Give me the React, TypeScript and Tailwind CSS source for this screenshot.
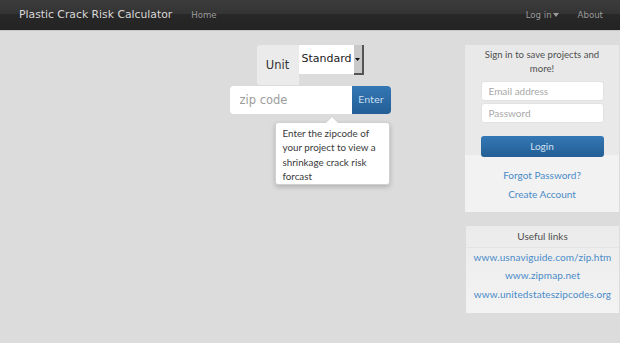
import { ChangeEvent, useState } from 'react';

const links = [
  'www.usnaviguide.com/zip.htm',
  'www.zipmap.net',
  'www.unitedstateszipcodes.org',
];

export default function App() {
  const [zip, setZip] = useState('');

  return (
    <div className="min-h-[343px] w-[620px] bg-[#dcdcdc] font-['DejaVu_Sans',sans-serif]">
      <nav className="flex h-[31px] items-center border-b border-[#c8c8c8] bg-[linear-gradient(#3c3c3c_0%,#343434_45%,#282828_46%,#232323_100%)] pl-[19px] pr-[17px]">
        <span className="text-[10.8px] text-[#d8d8d8]">Plastic Crack Risk Calculator</span>
        <span className="ml-[19px] text-[8.6px] text-[#9a9a9a]">Home</span>
        <div className="ml-auto flex items-center gap-[19px] text-[8.6px] text-[#9a9a9a]">
          <span className="flex items-center">
            Log in
            <svg width="6" height="4" viewBox="0 0 6 4" className="ml-[1px]">
              <path d="M0 0h6L3 4z" fill="#9a9a9a" />
            </svg>
          </span>
          <span>About</span>
        </div>
      </nav>

      <div className="grid grid-cols-[155px_310px_155px] pt-[14px]">
        <div />

        <div className="flex flex-col items-center">
          <div className="flex">
            <div className="flex h-[40px] w-[42px] items-center justify-center rounded-l-[3px] bg-[#ebebeb] pt-[1px] text-[11.5px] text-[#333]">
              Unit
            </div>
            <div className="flex h-[29px] w-[55px] items-center bg-white pl-[3px] text-[11px] text-[#222]">Standard</div>
            <div className="flex h-[30px] w-[10px] items-center justify-center border-r-2 border-b-2 border-[#555] bg-[#c9c9c9]">
              <svg width="5" height="3" viewBox="0 0 5 3">
                <path d="M0 0h5L2.5 3z" fill="#111" />
              </svg>
            </div>
          </div>

          <div className="mt-[1px] flex h-[28px]">
            <input
              value={zip}
              onChange={(e: ChangeEvent<HTMLInputElement>) => setZip(e.target.value)}
              placeholder="zip code"
              className="h-[28px] w-[122px] rounded-l-[4px] bg-white pl-[10px] text-[11.5px] text-[#333] outline-none placeholder:text-[#9c9c9c]"
            />
            <button className="h-[28px] w-[39px] rounded-r-[4px] bg-[linear-gradient(#3377b5,#245e95)] text-[9.5px] text-[#cfe0f2]">
              Enter
            </button>
          </div>

          <div className="relative ml-[44px] mt-[8px] w-[115px] rounded-[3px] border border-[#d0d0d0] bg-white px-[7px] pb-[1px] pt-[3px] font-['Lato',sans-serif] text-[9.8px] leading-[14.3px] text-[#3a3a3a] shadow-[0_2px_5px_rgba(0,0,0,0.2)]">
            <div className="absolute left-[49px] top-[-7px] h-0 w-0 border-x-[7px] border-b-[7px] border-x-transparent border-b-[#d0d0d0]" />
            <div className="absolute left-[50px] top-[-6px] h-0 w-0 border-x-[6px] border-b-[6px] border-x-transparent border-b-white" />
            Enter the zipcode of your project to view a shrinkage crack risk forcast
          </div>
        </div>

        <div className="flex flex-col pr-[1px] font-['Lato',sans-serif]">
          <div className="flex flex-col items-center bg-[linear-gradient(#e9e9e9_0%,#e9e9e9_66%,#f2f2f2_66%,#f2f2f2_100%)] px-[6px] pb-[11px] pt-[3px]">
            <p className="whitespace-nowrap text-center text-[9.6px] leading-[14px] text-[#505050]">
              Sign in to save projects and
              <br />
              more!
            </p>
            <input
              placeholder="Email address"
              className="mt-[5px] h-[20px] w-[123px] rounded-[3px] border border-[#e2e2e2] bg-white pl-[7px] text-[10px] outline-none placeholder:text-[#a8a8a8]"
            />
            <input
              type="password"
              placeholder="Password"
              className="mt-[2px] h-[20px] w-[123px] rounded-[3px] border border-[#e2e2e2] bg-white pl-[7px] text-[10px] outline-none placeholder:text-[#a8a8a8]"
            />
            <button className="mt-[13px] h-[21px] w-[123px] rounded-[3px] bg-[linear-gradient(#3478b5,#245e95)] text-[10px] text-[#cfe0f2]">
              Login
            </button>
            <a className="mt-[11px] text-[10px] leading-[14px] text-[#4a8bc8]">Forgot Password?</a>
            <a className="mt-[5px] text-[10px] leading-[14px] text-[#4a8bc8]">Create Account</a>
          </div>

          <div className="ml-[1px] mt-[14px] flex flex-col items-center bg-[linear-gradient(#ebebeb,#f3f3f3)] pb-[9px] text-[10px]">
            <div className="flex h-[22px] w-full items-center justify-center border-b border-[#e4e4e4] text-[#505050]">
              Useful links
            </div>
            {links.map((l) => (
              <a key={l} className="flex h-[18.5px] w-full items-center justify-center tracking-[0.1px] text-[#4a8bc8]">
                {l}
              </a>
            ))}
          </div>
        </div>
      </div>
    </div>
  );
}
